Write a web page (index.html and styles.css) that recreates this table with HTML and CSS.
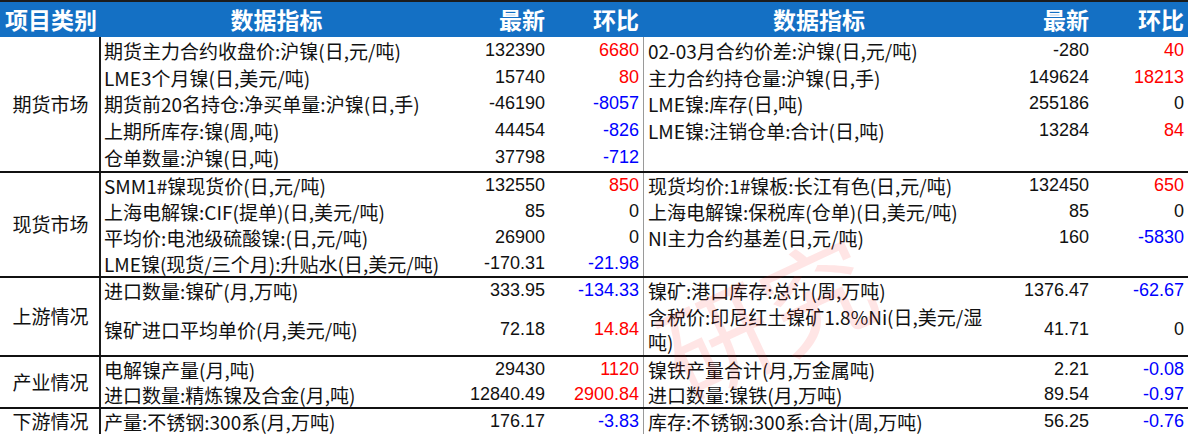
FILE: index.html
```html
<!DOCTYPE html>
<html lang="zh-CN">
<head>
<meta charset="utf-8">
<title>镍数据指标</title>
<link rel="stylesheet" href="styles.css">
</head>
<body>
<div class="sheet">
  <div class="head">
    <div class="hc c-cat">项目类别</div>
    <div class="hc c-name">数据指标</div>
    <div class="hc c-num">最新</div>
    <div class="hc c-chg">环比</div>
    <div class="hc c-name">数据指标</div>
    <div class="hc c-num2">最新</div>
    <div class="hc c-chg2">环比</div>
  </div>

  <div class="group">
    <div class="cat">期货市场</div>
    <div class="rows">
      <div class="row h268">
        <div class="nm">期货主力合约收盘价:沪镍(日,元/吨)</div><div class="num">132390</div><div class="chg up">6680</div>
        <div class="nm nm2">02-03月合约价差:沪镍(日,元/吨)</div><div class="num num2">-280</div><div class="chg chg2 up">40</div>
      </div>
      <div class="row h268">
        <div class="nm">LME3个月镍(日,美元/吨)</div><div class="num">15740</div><div class="chg up">80</div>
        <div class="nm nm2">主力合约持仓量:沪镍(日,手)</div><div class="num num2">149624</div><div class="chg chg2 up">18213</div>
      </div>
      <div class="row h268">
        <div class="nm">期货前20名持仓:净买单量:沪镍(日,手)</div><div class="num">-46190</div><div class="chg dn">-8057</div>
        <div class="nm nm2">LME镍:库存(日,吨)</div><div class="num num2">255186</div><div class="chg chg2">0</div>
      </div>
      <div class="row h268">
        <div class="nm">上期所库存:镍(周,吨)</div><div class="num">44454</div><div class="chg dn">-826</div>
        <div class="nm nm2">LME镍:注销仓单:合计(日,吨)</div><div class="num num2">13284</div><div class="chg chg2 up">84</div>
      </div>
      <div class="row h268">
        <div class="nm">仓单数量:沪镍(日,吨)</div><div class="num">37798</div><div class="chg dn">-712</div>
        <div class="nm nm2"></div><div class="num num2"></div><div class="chg chg2"></div>
      </div>
    </div>
  </div>

  <div class="group">
    <div class="cat">现货市场</div>
    <div class="rows">
      <div class="row h2575">
        <div class="nm">SMM1#镍现货价(日,元/吨)</div><div class="num">132550</div><div class="chg up">850</div>
        <div class="nm nm2">现货均价:1#镍板:长江有色(日,元/吨)</div><div class="num num2">132450</div><div class="chg chg2 up">650</div>
      </div>
      <div class="row h2575">
        <div class="nm">上海电解镍:CIF(提单)(日,美元/吨)</div><div class="num">85</div><div class="chg">0</div>
        <div class="nm nm2">上海电解镍:保税库(仓单)(日,美元/吨)</div><div class="num num2">85</div><div class="chg chg2">0</div>
      </div>
      <div class="row h2575">
        <div class="nm">平均价:电池级硫酸镍:(日,元/吨)</div><div class="num">26900</div><div class="chg">0</div>
        <div class="nm nm2">NI主力合约基差(日,元/吨)</div><div class="num num2">160</div><div class="chg chg2 dn">-5830</div>
      </div>
      <div class="row h2575">
        <div class="nm">LME镍(现货/三个月):升贴水(日,美元/吨)</div><div class="num">-170.31</div><div class="chg dn">-21.98</div>
        <div class="nm nm2"></div><div class="num num2"></div><div class="chg chg2"></div>
      </div>
    </div>
  </div>

  <div class="group">
    <div class="cat">上游情况</div>
    <div class="rows">
      <div class="row h26">
        <div class="nm">进口数量:镍矿(月,万吨)</div><div class="num">333.95</div><div class="chg dn">-134.33</div>
        <div class="nm nm2">镍矿:港口库存:总计(周,万吨)</div><div class="num num2">1376.47</div><div class="chg chg2 dn">-62.67</div>
      </div>
      <div class="row h51">
        <div class="nm">镍矿进口平均单价(月,美元/吨)</div><div class="num">72.18</div><div class="chg up">14.84</div>
        <div class="nm nm2">含税价:印尼红土镍矿1.8%Ni(日,美元/湿吨)</div><div class="num num2">41.71</div><div class="chg chg2">0</div>
      </div>
    </div>
  </div>

  <div class="group">
    <div class="cat">产业情况</div>
    <div class="rows">
      <div class="row h25">
        <div class="nm">电解镍产量(月,吨)</div><div class="num">29430</div><div class="chg up">1120</div>
        <div class="nm nm2">镍铁产量合计(月,万金属吨)</div><div class="num num2">2.21</div><div class="chg chg2 dn">-0.08</div>
      </div>
      <div class="row h25">
        <div class="nm">进口数量:精炼镍及合金(月,吨)</div><div class="num">12840.49</div><div class="chg up">2900.84</div>
        <div class="nm nm2">进口数量:镍铁(月,万吨)</div><div class="num num2">89.54</div><div class="chg chg2 dn">-0.97</div>
      </div>
    </div>
  </div>

  <div class="group">
    <div class="cat">下游情况</div>
    <div class="rows">
      <div class="row h25">
        <div class="nm">产量:不锈钢:300系(月,万吨)</div><div class="num">176.17</div><div class="chg dn">-3.83</div>
        <div class="nm nm2">库存:不锈钢:300系:合计(周,万吨)</div><div class="num num2">56.25</div><div class="chg chg2 dn">-0.76</div>
      </div>
    </div>
  </div>

  <div class="watermark" aria-hidden="true">研究</div>
</div>
</body>
</html>
```

FILE: styles.css
```css
html, body {
  margin: 0;
  padding: 0;
  background: #ffffff;
}

body {
  font-family: "Noto Sans CJK SC", "Noto Sans", sans-serif;
  color: #111;
}

.sheet {
  position: relative;
  width: 1188px;
  overflow: hidden;
  height: 434px;
}

.head {
  display: grid;
  grid-template-columns: 101px 351px 95px 96px 352px 96px 97px;
  height: 35px;
  border-top: 2px solid #1c1c1c;
  background: #1470c4;
  color: #ffffff;
  font-weight: 700;
  font-size: 23px;
}

.hc {
  display: flex;
  align-items: center;
  line-height: 35px;
  white-space: nowrap;
}

.hc.c-cat { justify-content: center; padding-left: 1px; }
.hc.c-name { justify-content: center; }
.hc.c-num { justify-content: flex-end; padding-right: 2px; }
.hc.c-chg { justify-content: flex-end; padding-right: 4px; }
.hc.c-num2 { justify-content: flex-end; padding-right: 2px; }
.hc.c-chg2 { justify-content: flex-end; padding-right: 4px; }

.group {
  display: flex;
}

.group + .group {
  border-top: 2px solid #111;
}

.cat {
  width: 101px;
  flex: none;
  box-sizing: border-box;
  border-right: 2px solid #1a1a1a;
  display: flex;
  align-items: center;
  justify-content: center;
  font-size: 19px;
  line-height: 22px;
  padding-left: 2px;
  white-space: nowrap;
}

.rows {
  flex: 1;
  display: flex;
  flex-direction: column;
}

.row {
  display: grid;
  grid-template-columns: 351px 95px 96px 352px 96px 97px;
}

.h268 { height: 26.8px; }
.h2575 { height: 25.75px; }
.h26 { height: 26px; }
.h25 { height: 25px; }
.h51 { height: 51px; }

.nm {
  display: flex;
  align-items: center;
  padding-left: 3px;
  font-size: 19px;
  line-height: 25px;
  white-space: nowrap;
}

.nm2 {
  border-left: 1px solid #9a9a9a;
  padding-left: 4px;
  padding-right: 2px;
  white-space: normal;
}

.num, .chg {
  display: flex;
  align-items: center;
  justify-content: flex-end;
  font-family: "Liberation Sans", Arial, sans-serif;
  font-size: 18px;
  white-space: nowrap;
}

.num { padding-right: 2px; }
.chg { padding-right: 4px; }
.num2 { padding-right: 2px; }
.chg2 { padding-right: 4px; }

.up { color: #ff0000; }
.dn { color: #0000ff; }

.watermark {
  position: absolute;
  left: 655px;
  top: 258px;
  font-size: 110px;
  line-height: 1;
  color: rgba(255, 40, 40, 0.12);
  transform: rotate(-25deg);
  transform-origin: center center;
  white-space: nowrap;
  pointer-events: none;
}
```
